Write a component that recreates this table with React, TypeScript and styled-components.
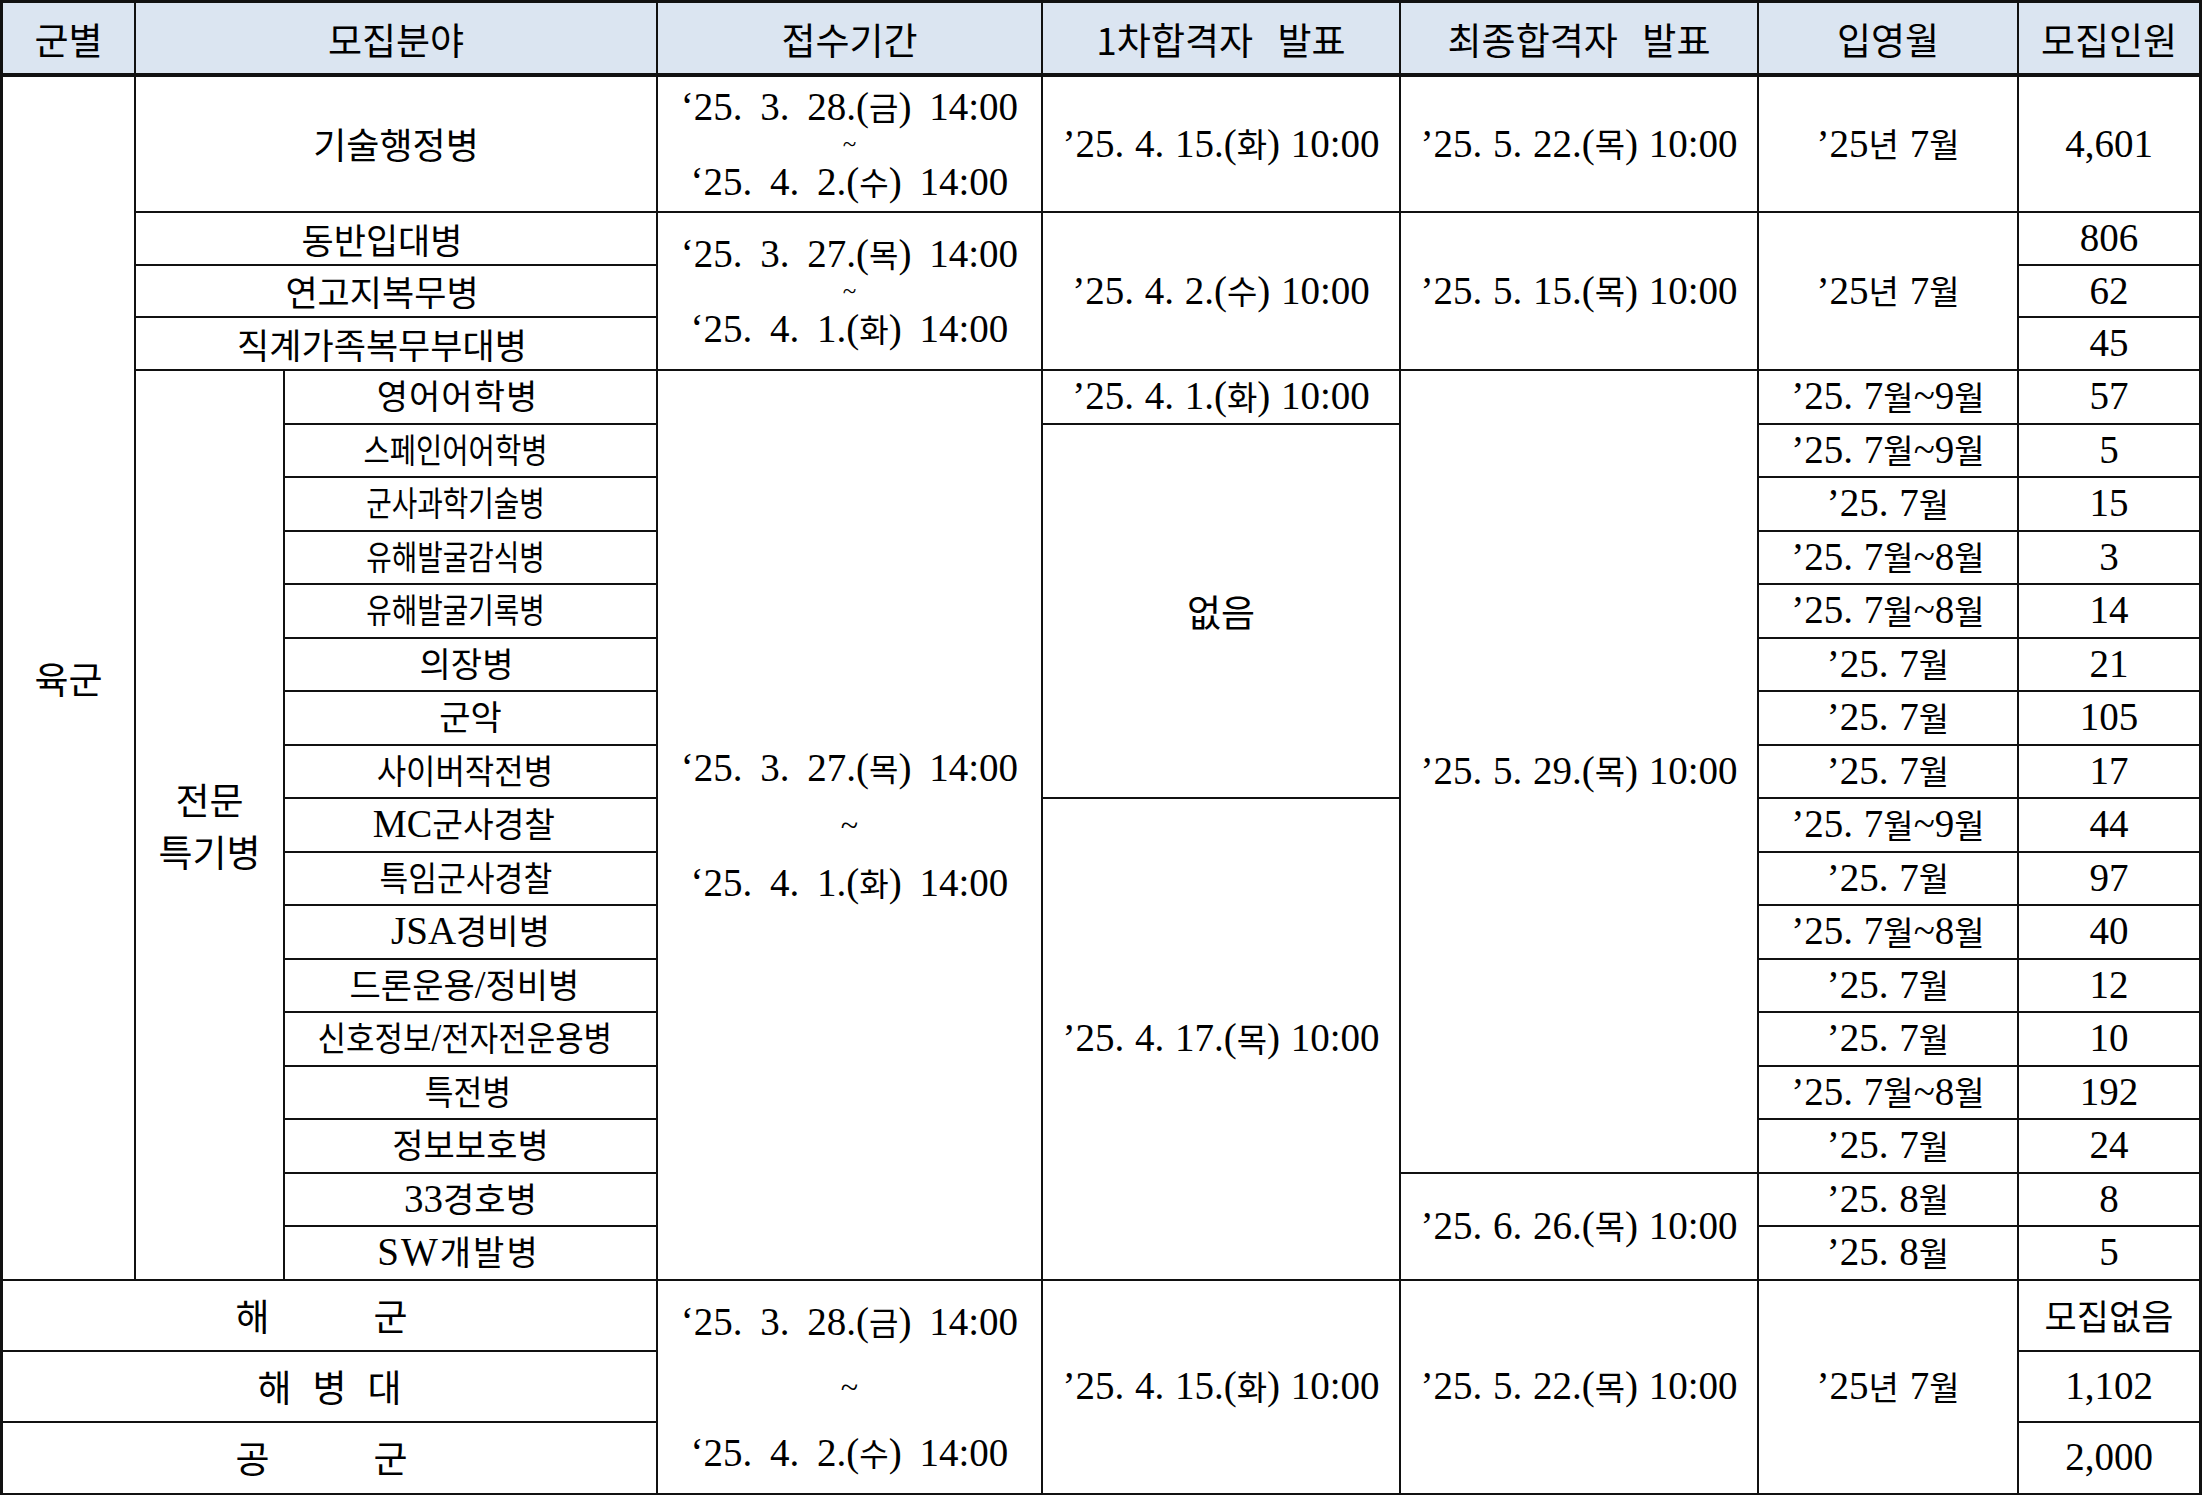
import React from "react";
import styled, { createGlobalStyle } from "styled-components";

const GlobalStyle = createGlobalStyle`
  html, body {
    margin: 0;
    padding: 0;
    background: #ffffff;
  }
  body {
    width: 2204px;
    height: 1495px;
    overflow: hidden;
  }
`;

const HANGUL = /([\uAC00-\uD7A3\u3131-\u318E]+)/;

// Korean text is set in its own font and size, the digits stay in the serif
function Mixed({ text, ko = 33 }: { text: string; ko?: number }) {
  return (
    <>
      {text.split(HANGUL).map((part, i) =>
        HANGUL.test(part) ? (
          <Ko key={i} $size={ko}>
            {part}
          </Ko>
        ) : (
          part
        )
      )}
    </>
  );
}

// sx: horizontal squeeze for long names, ls: letter spacing, nudge: shift to the left
type Special = { name: string; month: string; count: string; sx: number; ls: number; nudge: number };

const specials: Special[] = [
  { name: "영어어학병", month: "’25. 7월~9월", count: "57", sx: 1, ls: 1, nudge: 26 },
  { name: "스페인어어학병", month: "’25. 7월~9월", count: "5", sx: 0.84, ls: 0, nudge: 30 },
  { name: "군사과학기술병", month: "’25. 7월", count: "15", sx: 0.815, ls: 0, nudge: 30 },
  { name: "유해발굴감식병", month: "’25. 7월~8월", count: "3", sx: 0.815, ls: 0, nudge: 30 },
  { name: "유해발굴기록병", month: "’25. 7월~8월", count: "14", sx: 0.815, ls: 0, nudge: 30 },
  { name: "의장병", month: "’25. 7월", count: "21", sx: 1, ls: 0, nudge: 8 },
  { name: "군악", month: "’25. 7월", count: "105", sx: 1, ls: 0, nudge: 0 },
  { name: "사이버작전병", month: "’25. 7월", count: "17", sx: 0.94, ls: 0, nudge: 12 },
  { name: "MC군사경찰", month: "’25. 7월~9월", count: "44", sx: 0.98, ls: 0, nudge: 14 },
  { name: "특임군사경찰", month: "’25. 7월", count: "97", sx: 0.92, ls: 0, nudge: 10 },
  { name: "JSA경비병", month: "’25. 7월~8월", count: "40", sx: 1, ls: 0, nudge: 0 },
  { name: "드론운용/정비병", month: "’25. 7월", count: "12", sx: 1, ls: 0, nudge: 12 },
  { name: "신호정보/전자전운용병", month: "’25. 7월", count: "10", sx: 0.91, ls: 0, nudge: 12 },
  { name: "특전병", month: "’25. 7월~8월", count: "192", sx: 0.92, ls: 0, nudge: 6 },
  { name: "정보보호병", month: "’25. 7월", count: "24", sx: 1, ls: 0, nudge: 0 },
  { name: "33경호병", month: "’25. 8월", count: "8", sx: 1, ls: 0, nudge: 0 },
  { name: "SW개발병", month: "’25. 8월", count: "5", sx: 1, ls: 2, nudge: 24 },
];

const armyOthers = [
  { name: "동반입대병", count: "806" },
  { name: "연고지복무병", count: "62" },
  { name: "직계가족복무부대병", count: "45" },
];

const others = [
  { name: "해군", spacing: 104, shift: 88, count: "모집없음" },
  { name: "해병대", spacing: 21, shift: 21, count: "1,102" },
  { name: "공군", spacing: 104, shift: 88, count: "2,000" },
];

// from ~ to, gap = distance between the centres of the lines
function Period({ from, to, gap, small }: { from: string; to: string; gap: number; small?: boolean }) {
  return (
    <Stack>
      <Line><Mixed text={from} ko={32} /></Line>
      <Tilde $lh={gap * 2 - 42} $small={small}>~</Tilde>
      <Line><Mixed text={to} ko={32} /></Line>
    </Stack>
  );
}

export default function App() {
  const firstSub = 6;
  return (
    <>
      <GlobalStyle />
      <Grid>
        <HeadCell $c="1" $r="1">군별</HeadCell>
        <HeadCell $c="2 / 4" $r="1">모집분야</HeadCell>
        <HeadCell $c="4" $r="1">접수기간</HeadCell>
        <HeadCell $c="5" $r="1">1차합격자&nbsp; 발표</HeadCell>
        <HeadCell $c="6" $r="1">최종합격자&nbsp; 발표</HeadCell>
        <HeadCell $c="7" $r="1">입영월</HeadCell>
        <HeadCell $c="8" $r="1">모집인원</HeadCell>

        <Cell $c="1" $r="2 / 23"><Ko $size={37}>육군</Ko></Cell>

        <Cell $c="2 / 4" $r="2"><Ko $size={36}>기술행정병</Ko></Cell>
        <Cell $c="4" $r="2" $wide>
          <Period from="‘25. 3. 28.(금) 14:00" to="‘25. 4. 2.(수) 14:00" gap={37} small />
        </Cell>
        <Cell $c="5" $r="2"><Mixed text="’25. 4. 15.(화) 10:00" /></Cell>
        <Cell $c="6" $r="2"><Mixed text="’25. 5. 22.(목) 10:00" /></Cell>
        <Cell $c="7" $r="2"><Mixed text="’25년 7월" /></Cell>
        <Cell $c="8" $r="2">4,601</Cell>

        {armyOthers.map((o, i) => (
          <React.Fragment key={o.name}>
            <Cell $c="2 / 4" $r={String(3 + i)} $nudge={28}><Ko $size={35}>{o.name}</Ko></Cell>
            <Cell $c="8" $r={String(3 + i)}>{o.count}</Cell>
          </React.Fragment>
        ))}
        <Cell $c="4" $r="3 / 6" $wide>
          <Period from="‘25. 3. 27.(목) 14:00" to="‘25. 4. 1.(화) 14:00" gap={37} small />
        </Cell>
        <Cell $c="5" $r="3 / 6"><Mixed text="’25. 4. 2.(수) 10:00" /></Cell>
        <Cell $c="6" $r="3 / 6"><Mixed text="’25. 5. 15.(목) 10:00" /></Cell>
        <Cell $c="7" $r="3 / 6"><Mixed text="’25년 7월" /></Cell>

        <Cell $c="2" $r="6 / 23">
          <NameStack>
            <Ko $size={37}>전문</Ko>
            <Ko $size={37}>특기병</Ko>
          </NameStack>
        </Cell>
        {specials.map((s, i) => {
          const r = String(firstSub + i);
          return (
            <React.Fragment key={s.name}>
              <Cell $c="3" $r={r} $nudge={s.nudge}>
                <Squeeze $sx={s.sx} $ls={s.ls}><Mixed text={s.name} ko={34} /></Squeeze>
              </Cell>
              <Cell $c="7" $r={r}><Mixed text={s.month} /></Cell>
              <Cell $c="8" $r={r}>{s.count}</Cell>
            </React.Fragment>
          );
        })}
        <Cell $c="4" $r="6 / 23" $wide>
          <Period from="‘25. 3. 27.(목) 14:00" to="‘25. 4. 1.(화) 14:00" gap={57} />
        </Cell>
        <Cell $c="5" $r="6"><Mixed text="’25. 4. 1.(화) 10:00" /></Cell>
        <Cell $c="5" $r="7 / 14"><Ko $size={37}>없음</Ko></Cell>
        <Cell $c="5" $r="14 / 23"><Mixed text="’25. 4. 17.(목) 10:00" /></Cell>
        <Cell $c="6" $r="6 / 21"><Mixed text="’25. 5. 29.(목) 10:00" /></Cell>
        <Cell $c="6" $r="21 / 23"><Mixed text="’25. 6. 26.(목) 10:00" /></Cell>

        {others.map((o, i) => (
          <React.Fragment key={o.name}>
            <Cell $c="1 / 4" $r={String(23 + i)}>
              <Spread $gap={o.spacing} $shift={o.shift}>{o.name}</Spread>
            </Cell>
            <Cell $c="8" $r={String(23 + i)}><Mixed text={o.count} ko={35} /></Cell>
          </React.Fragment>
        ))}
        <Cell $c="4" $r="23 / 26" $wide>
          <Period from="‘25. 3. 28.(금) 14:00" to="‘25. 4. 2.(수) 14:00" gap={65} />
        </Cell>
        <Cell $c="5" $r="23 / 26"><Mixed text="’25. 4. 15.(화) 10:00" /></Cell>
        <Cell $c="6" $r="23 / 26"><Mixed text="’25. 5. 22.(목) 10:00" /></Cell>
        <Cell $c="7" $r="23 / 26"><Mixed text="’25년 7월" /></Cell>
      </Grid>
    </>
  );
}

const Grid = styled.div`
  display: grid;
  box-sizing: border-box;
  width: 2202px;
  border: 3px solid #111;
  background: #111;
  gap: 2px;
  grid-template-columns: 131px 147px 371px 383px 356px 356px 258px 180px;
  grid-template-rows: 72px 134px 51px 50px 51px repeat(17, 51.5px) 69px 69px 70px;
`;

const Cell = styled.div<{ $c: string; $r: string; $wide?: boolean; $nudge?: number }>`
  grid-column: ${(p) => p.$c};
  grid-row: ${(p) => p.$r};
  display: flex;
  align-items: center;
  justify-content: center;
  box-sizing: border-box;
  min-height: 0;
  padding-right: ${(p) => p.$nudge ?? 0}px;
  background: #ffffff;
  color: #000;
  font-family: "Liberation Serif", "Noto Sans CJK KR", serif;
  font-size: 39px;
  line-height: 1.2;
  word-spacing: ${(p) => (p.$wide ? "8px" : "1px")};
  text-align: center;
  white-space: pre;
`;

const HeadCell = styled(Cell)`
  background: #dbe5f1;
  font-family: "Noto Sans CJK KR", sans-serif;
  font-size: 37px;
  word-spacing: 4px;
  box-shadow: inset 0 -2px 0 #111;
`;

const Ko = styled.span<{ $size: number }>`
  font-family: "Noto Sans CJK KR", sans-serif;
  font-size: ${(p) => p.$size}px;
  font-weight: 400;
  word-spacing: normal;
`;

const Squeeze = styled.span<{ $sx: number; $ls: number }>`
  display: inline-block;
  letter-spacing: ${(p) => p.$ls}px;
  transform: scaleX(${(p) => p.$sx});
`;

const Stack = styled.div`
  display: flex;
  flex-direction: column;
  align-items: center;
`;

const Line = styled.span`
  line-height: 42px;
`;

const Tilde = styled.span<{ $lh: number; $small?: boolean }>`
  font-size: ${(p) => (p.$small ? 25 : 32)}px;
  line-height: ${(p) => p.$lh}px;
`;

const NameStack = styled.div`
  display: flex;
  flex-direction: column;
  align-items: center;
  line-height: 52px;
`;

const Spread = styled.span<{ $gap: number; $shift: number }>`
  font-family: "Noto Sans CJK KR", sans-serif;
  font-size: 37px;
  letter-spacing: ${(p) => p.$gap}px;
  padding-left: ${(p) => p.$shift}px;
`;
